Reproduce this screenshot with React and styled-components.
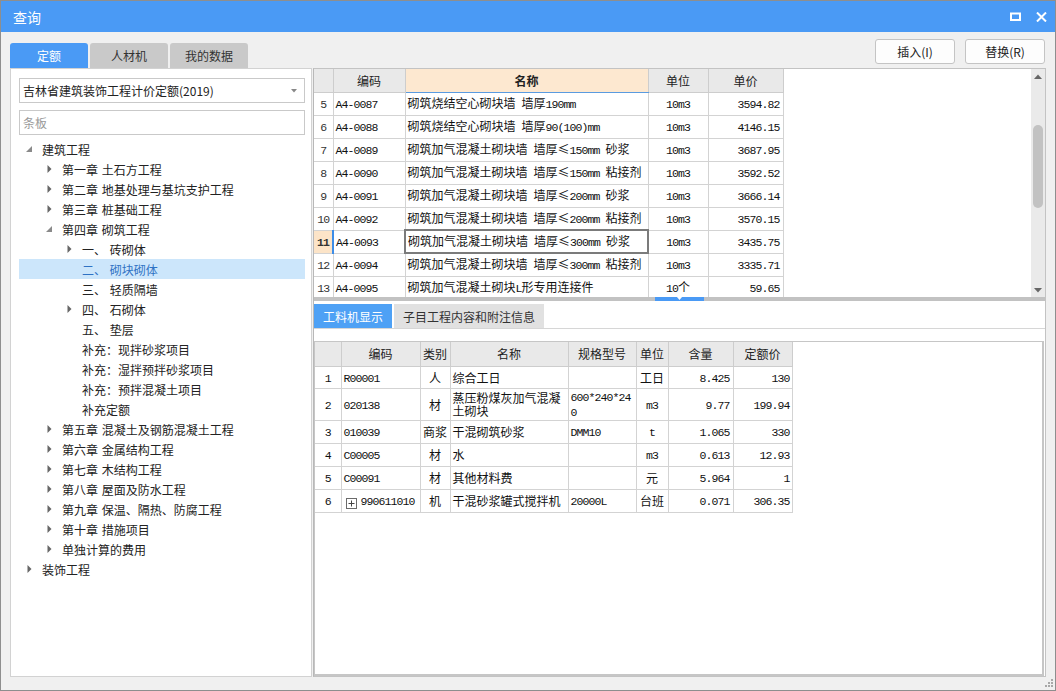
import React from 'react'
import styled, { createGlobalStyle } from 'styled-components'

const GlobalStyle = createGlobalStyle`
	html, body {
		margin: 0;
		padding: 0;
		background: #ffffff;
	}
	body {
		font-family: 'Noto Sans CJK SC', 'Noto Sans', sans-serif;
		font-size: 12px;
		color: #222;
	}
	* {
		box-sizing: border-box;
	}
`

const BLUE = '#4a9af5'

const Window = styled.div`
	position: relative;
	width: 1056px;
	height: 691px;
	border: 1px solid #8e8e8e;
	background: #f0f0f0;
	display: flex;
	flex-direction: column;
`

const TitleBar = styled.div`
	height: 31px;
	flex: none;
	background: ${BLUE};
	color: #fff;
	font-size: 14px;
	display: flex;
	align-items: center;
	justify-content: space-between;
	padding: 0 8px 0 12px;
`

const WinControls = styled.div`
	display: flex;
	align-items: center;
	gap: 15px;
`

const Body = styled.div`
	flex: 1;
	min-height: 0;
	display: flex;
	flex-direction: column;
	padding: 0 9px 13px 9px;
`

const HeadRow = styled.div`
	height: 36px;
	flex: none;
	display: flex;
	justify-content: space-between;
`

const Tabs = styled.div`
	align-self: flex-end;
	display: flex;
	gap: 2px;
`

const Tab = styled.div`
	width: 78px;
	height: 25px;
	border-radius: 3px 3px 0 0;
	display: flex;
	align-items: center;
	justify-content: center;
	font-size: 12px;
	background: ${(p) => (p.$active ? BLUE : '#c9c9c9')};
	color: ${(p) => (p.$active ? '#fff' : '#333')};
`

const Buttons = styled.div`
	display: flex;
	gap: 10px;
	margin-top: 7px;
	margin-right: 1px;
`

const Button = styled.div`
	width: 80px;
	height: 25px;
	background: #fdfdfd;
	border: 1px solid #c4c4c4;
	border-radius: 3px;
	display: flex;
	align-items: center;
	justify-content: center;
	font-size: 12px;
	color: #222;
`

const Main = styled.div`
	flex: 1;
	min-height: 0;
	display: flex;
`

const LeftPanel = styled.div`
	width: 302px;
	flex: none;
	background: #fff;
	border: 1px solid #d2d2d2;
	padding: 9px 6px 0 8px;
	display: flex;
	flex-direction: column;
`

const Select = styled.div`
	height: 25px;
	border: 1px solid #c9c9c9;
	display: flex;
	align-items: center;
	justify-content: space-between;
	padding: 0 7px 0 3px;
	font-size: 12px;
	color: #222;
`

const Search = styled.div`
	height: 25px;
	margin-top: 7px;
	border: 1px solid #c9c9c9;
	display: flex;
	align-items: center;
	padding: 0 3px;
	font-size: 12px;
	color: #9a9a9a;
`

const Tree = styled.div`
	margin-top: 4px;
	display: flex;
	flex-direction: column;
`

const TreeRow = styled.div`
	height: 20px;
	display: flex;
	align-items: center;
	padding-left: ${(p) => p.$level * 20 + 2}px;
	background: ${(p) => (p.$selected ? '#cce6fb' : 'transparent')};
	color: ${(p) => (p.$selected ? '#2f72c4' : '#222')};
	font-size: 12px;
	white-space: nowrap;
	word-spacing: 1px;
`

const Twisty = styled.span`
	width: 16px;
	height: 20px;
	margin-right: 5px;
	flex: none;
	display: flex;
	align-items: center;
	justify-content: center;
`

const RightPanel = styled.div`
	flex: 1;
	min-width: 0;
	display: flex;
	flex-direction: column;
	border: 1px solid #c3c3c3;
	border-left: 1px solid #b8b8b8;
	margin-left: 1px;
	background: #fff;
`

const TopArea = styled.div`
	height: 228px;
	flex: none;
	display: flex;
	overflow: hidden;
`

const GridWrap = styled.div`
	flex: 1;
	overflow: hidden;
`

const Grid = styled.table`
	border-collapse: collapse;
	table-layout: fixed;
	width: ${(p) => p.$w}px;
	font-size: 12px;
	color: #111;
`

const Th = styled.th`
	height: ${(p) => p.$h}px;
	padding: 0;
	font-weight: ${(p) => (p.$hot ? 700 : 400)};
	color: #222;
	background: ${(p) => (p.$hot ? '#fde8d0' : '#e9e9e9')};
	border: 1px solid #cdcdcd;
	border-top: none;
	border-bottom: 1px solid ${(p) => (p.$hot ? '#5a9be0' : '#cdcdcd')};
	&:first-child {
		border-left: none;
	}
`

const Td = styled.td`
	height: ${(p) => p.$h || 23}px;
	padding: 0 ${(p) => (p.$pad === undefined ? 2 : p.$pad)}px;
	text-align: ${(p) => p.$align || 'left'};
	vertical-align: middle;
	line-height: 13px;
	border: 1px solid #d3d3d3;
	white-space: ${(p) => (p.$wrap ? 'normal' : 'nowrap')};
	word-break: break-all;
	overflow: hidden;
	background: #fff;
	&:first-child {
		border-left: none;
	}
`

const NumTd = styled(Td)`
	color: #333;
	background: ${(p) => (p.$current ? '#fce4c8' : '#fff')};
	font-weight: ${(p) => (p.$current ? 700 : 400)};
	border-right: ${(p) => (p.$current ? '2px solid #3d8de8' : '1px solid #d3d3d3')};
`

const FocusTd = styled(Td)`
	border: 2px solid #7b7b7b;
`

const Asc = styled.span`
	font-family: 'Liberation Mono', 'DejaVu Sans Mono', monospace;
	font-size: 11.5px;
	letter-spacing: -0.9px;
`

const Scrollbar = styled.div`
	width: 14px;
	flex: none;
	background: #eaeaea;
	display: flex;
	flex-direction: column;
	align-items: center;
	padding: 5px 0 4px;
`

const Thumb = styled.div`
	width: 10px;
	height: 83px;
	margin-top: 46px;
	border-radius: 5px;
	background: #c2c2c2;
`

const Spacer = styled.div`
	flex: 1;
`

const Splitter = styled.div`
	height: 4px;
	flex: none;
	background: #c2c2c2;
	display: flex;
`

const SplitHandle = styled.div`
	width: 49px;
	height: 4px;
	margin-left: 341px;
	background: ${BLUE};
	display: flex;
	justify-content: center;
`

const Bottom = styled.div`
	flex: 1;
	min-height: 0;
	display: flex;
	flex-direction: column;
`

const SubTabs = styled.div`
	flex: none;
	display: flex;
	gap: 2px;
	padding-top: 3px;
	border-bottom: 1px solid #d6d6d6;
`

const SubTab = styled.div`
	height: 24px;
	padding: 0 9px;
	display: flex;
	align-items: center;
	font-size: 12px;
	background: ${(p) => (p.$active ? '#4ea1f5' : '#e1e1e1')};
	color: ${(p) => (p.$active ? '#fff' : '#333')};
`

const DetailBox = styled.div`
	flex: 1;
	min-height: 0;
	margin-top: 12px;
	margin-right: 1px;
	border: 1px solid #c6c6c6;
	border-right-width: 2px;
	border-bottom-width: 2px;
	overflow: hidden;
`

const PlusBox = styled.span`
	display: inline-flex;
	width: 11px;
	height: 11px;
	border: 1px solid #6a6a6a;
	align-items: center;
	justify-content: center;
	margin: 0 4px 0 2px;
	vertical-align: -2px;
`

const Grip = styled.svg`
	position: absolute;
	right: 2px;
	bottom: 3px;
`

// wrap runs of latin characters in the monospace face
const mix = (s) =>
	s.split(/([\x20-\x7e]+)/).map((part, i) =>
		/[\x20-\x7e]/.test(part) ? <Asc key={i}>{part}</Asc> : part
	)

const tree = [
	{ l: 0, t: '建筑工程', a: 'open' },
	{ l: 1, t: '第一章 土石方工程', a: 'closed' },
	{ l: 1, t: '第二章 地基处理与基坑支护工程', a: 'closed' },
	{ l: 1, t: '第三章 桩基础工程', a: 'closed' },
	{ l: 1, t: '第四章 砌筑工程', a: 'open' },
	{ l: 2, t: '一、 砖砌体', a: 'closed' },
	{ l: 2, t: '二、 砌块砌体', sel: true },
	{ l: 2, t: '三、 轻质隔墙' },
	{ l: 2, t: '四、 石砌体', a: 'closed' },
	{ l: 2, t: '五、 垫层' },
	{ l: 2, t: '补充：现拌砂浆项目' },
	{ l: 2, t: '补充：湿拌预拌砂浆项目' },
	{ l: 2, t: '补充：预拌混凝土项目' },
	{ l: 2, t: '补充定额' },
	{ l: 1, t: '第五章 混凝土及钢筋混凝土工程', a: 'closed' },
	{ l: 1, t: '第六章 金属结构工程', a: 'closed' },
	{ l: 1, t: '第七章 木结构工程', a: 'closed' },
	{ l: 1, t: '第八章 屋面及防水工程', a: 'closed' },
	{ l: 1, t: '第九章 保温、隔热、防腐工程', a: 'closed' },
	{ l: 1, t: '第十章 措施项目', a: 'closed' },
	{ l: 1, t: '单独计算的费用', a: 'closed' },
	{ l: 0, t: '装饰工程', a: 'closed' },
]

const quotas = [
	['5', 'A4-0087', '砌筑烧结空心砌块墙 墙厚190mm', '10m3', '3594.82'],
	['6', 'A4-0088', '砌筑烧结空心砌块墙 墙厚90(100)mm', '10m3', '4146.15'],
	['7', 'A4-0089', '砌筑加气混凝土砌块墙 墙厚≤150mm 砂浆', '10m3', '3687.95'],
	['8', 'A4-0090', '砌筑加气混凝土砌块墙 墙厚≤150mm 粘接剂', '10m3', '3592.52'],
	['9', 'A4-0091', '砌筑加气混凝土砌块墙 墙厚≤200mm 砂浆', '10m3', '3666.14'],
	['10', 'A4-0092', '砌筑加气混凝土砌块墙 墙厚≤200mm 粘接剂', '10m3', '3570.15'],
	['11', 'A4-0093', '砌筑加气混凝土砌块墙 墙厚≤300mm 砂浆', '10m3', '3435.75'],
	['12', 'A4-0094', '砌筑加气混凝土砌块墙 墙厚≤300mm 粘接剂', '10m3', '3335.71'],
	['13', 'A4-0095', '砌筑加气混凝土砌块L形专用连接件', '10个', '59.65'],
]

const materials = [
	{ n: '1', code: 'R00001', kind: '人', name: '综合工日', spec: '', unit: '工日', qty: '8.425', price: '130', h: 22 },
	{ n: '2', code: '020138', kind: '材', name: '蒸压粉煤灰加气混凝土砌块', spec: '600*240*240', unit: 'm3', qty: '9.77', price: '199.94', h: 32 },
	{ n: '3', code: '010039', kind: '商浆', name: '干混砌筑砂浆', spec: 'DMM10', unit: 't', qty: '1.065', price: '330', h: 23 },
	{ n: '4', code: 'C00005', kind: '材', name: '水', spec: '', unit: 'm3', qty: '0.613', price: '12.93', h: 23 },
	{ n: '5', code: 'C00091', kind: '材', name: '其他材料费', spec: '', unit: '元', qty: '5.964', price: '1', h: 23 },
	{ n: '6', code: '990611010', kind: '机', name: '干混砂浆罐式搅拌机', spec: '20000L', unit: '台班', qty: '0.071', price: '306.35', h: 23, plus: true },
]

const Arrow = ({ state }) => {
	if (state === 'open')
		return (
			<svg width="6" height="6" viewBox="0 0 6 6">
				<polygon points="6,0 6,6 0,6" fill="#8a8a8a" />
			</svg>
		)
	if (state === 'closed')
		return (
			<svg width="5" height="8" viewBox="0 0 5 8">
				<polygon points="0.5,0 4.5,4 0.5,8" fill="#666" />
			</svg>
		)
	return null
}

const App = () => {
	return (
		<>
			<GlobalStyle />
			<Window>
				<TitleBar>
					<span>查询</span>
					<WinControls>
						<svg width="11" height="9" viewBox="0 0 11 9">
							<rect x="1" y="1.5" width="9" height="6.5" fill="none" stroke="#fff" strokeWidth="2" />
						</svg>
						<svg width="11" height="10" viewBox="0 0 11 10">
							<path d="M1 0.5 L10 9.5 M10 0.5 L1 9.5" stroke="#fff" strokeWidth="2" />
						</svg>
					</WinControls>
				</TitleBar>
				<Body>
					<HeadRow>
						<Tabs>
							<Tab $active>定额</Tab>
							<Tab>人材机</Tab>
							<Tab>我的数据</Tab>
						</Tabs>
						<Buttons>
							<Button>插入(I)</Button>
							<Button>替换(R)</Button>
						</Buttons>
					</HeadRow>
					<Main>
						<LeftPanel>
							<Select>
								<span>吉林省建筑装饰工程计价定额(2019)</span>
								<svg width="6" height="4" viewBox="0 0 6 4">
									<polygon points="0,0 6,0 3,3.5" fill="#888" />
								</svg>
							</Select>
							<Search>条板</Search>
							<Tree>
								{tree.map((n, i) => (
									<TreeRow key={i} $level={n.l} $selected={n.sel}>
										<Twisty>
											<Arrow state={n.a} />
										</Twisty>
										{n.t}
									</TreeRow>
								))}
							</Tree>
						</LeftPanel>
						<RightPanel>
							<TopArea>
								<GridWrap>
									<Grid $w={469}>
										<colgroup>
											<col style={{ width: 19 }} />
											<col style={{ width: 72 }} />
											<col style={{ width: 243 }} />
											<col style={{ width: 60 }} />
											<col style={{ width: 75 }} />
										</colgroup>
										<thead>
											<tr>
												<Th $h={23} />
												<Th $h={23}>编码</Th>
												<Th $h={23} $hot>
													名称
												</Th>
												<Th $h={23}>单位</Th>
												<Th $h={23}>单价</Th>
											</tr>
										</thead>
										<tbody>
											{quotas.map((r) => {
												const cur = r[0] === '11'
												const NameCell = cur ? FocusTd : Td
												return (
													<tr key={r[0]}>
														<NumTd $align="center" $pad={0} $current={cur}>
															<Asc>{r[0]}</Asc>
														</NumTd>
														<Td>{mix(r[1])}</Td>
														<NameCell>{mix(r[2])}</NameCell>
														<Td $align="center">{mix(r[3])}</Td>
														<Td $align="right" $pad={3}>
															{mix(r[4])}
														</Td>
													</tr>
												)
											})}
										</tbody>
									</Grid>
								</GridWrap>
								<Scrollbar>
									<svg width="8" height="5" viewBox="0 0 8 5">
										<polygon points="0,5 8,5 4,0.5" fill="#666" />
									</svg>
									<Thumb />
									<Spacer />
									<svg width="8" height="5" viewBox="0 0 8 5">
										<polygon points="0,0 8,0 4,4.5" fill="#666" />
									</svg>
								</Scrollbar>
							</TopArea>
							<Splitter>
								<SplitHandle>
									<svg width="7" height="4" viewBox="0 0 7 4">
										<polygon points="1,0 6,0 3.5,3" fill="#fff" />
									</svg>
								</SplitHandle>
							</Splitter>
							<Bottom>
								<SubTabs>
									<SubTab $active>工料机显示</SubTab>
									<SubTab>子目工程内容和附注信息</SubTab>
								</SubTabs>
								<DetailBox>
									<Grid $w={477}>
										<colgroup>
											<col style={{ width: 26 }} />
											<col style={{ width: 79 }} />
											<col style={{ width: 30 }} />
											<col style={{ width: 118 }} />
											<col style={{ width: 68 }} />
											<col style={{ width: 32 }} />
											<col style={{ width: 65 }} />
											<col style={{ width: 59 }} />
										</colgroup>
										<thead>
											<tr>
												<Th $h={24} />
												<Th $h={24}>编码</Th>
												<Th $h={24}>类别</Th>
												<Th $h={24}>名称</Th>
												<Th $h={24}>规格型号</Th>
												<Th $h={24}>单位</Th>
												<Th $h={24}>含量</Th>
												<Th $h={24}>定额价</Th>
											</tr>
										</thead>
										<tbody>
											{materials.map((m) => (
												<tr key={m.n}>
													<Td $h={m.h} $align="center" $pad={0}>
														<Asc>{m.n}</Asc>
													</Td>
													<Td $h={m.h}>
														{m.plus && (
															<PlusBox>
																<svg width="7" height="7" viewBox="0 0 7 7">
																	<path d="M0.5 3.5 H6.5 M3.5 0.5 V6.5" stroke="#444" strokeWidth="1" />
																</svg>
															</PlusBox>
														)}
														{mix(m.code)}
													</Td>
													<Td $h={m.h} $align="center" $pad={0}>
														{m.kind}
													</Td>
													<Td $h={m.h} $wrap>
														{m.name}
													</Td>
													<Td $h={m.h} $wrap>
														{mix(m.spec)}
													</Td>
													<Td $h={m.h} $align="center" $pad={0}>
														{mix(m.unit)}
													</Td>
													<Td $h={m.h} $align="right" $pad={3}>
														{mix(m.qty)}
													</Td>
													<Td $h={m.h} $align="right" $pad={2}>
														{mix(m.price)}
													</Td>
												</tr>
											))}
										</tbody>
									</Grid>
								</DetailBox>
							</Bottom>
						</RightPanel>
					</Main>
				</Body>
				<Grip width="8" height="8" viewBox="0 0 8 8">
					<rect x="6" y="0" width="2" height="2" fill="#a8a8a8" />
					<rect x="3" y="3" width="2" height="2" fill="#a8a8a8" />
					<rect x="6" y="3" width="2" height="2" fill="#a8a8a8" />
					<rect x="0" y="6" width="2" height="2" fill="#a8a8a8" />
					<rect x="3" y="6" width="2" height="2" fill="#a8a8a8" />
					<rect x="6" y="6" width="2" height="2" fill="#a8a8a8" />
				</Grip>
			</Window>
		</>
	)
}

export default App
